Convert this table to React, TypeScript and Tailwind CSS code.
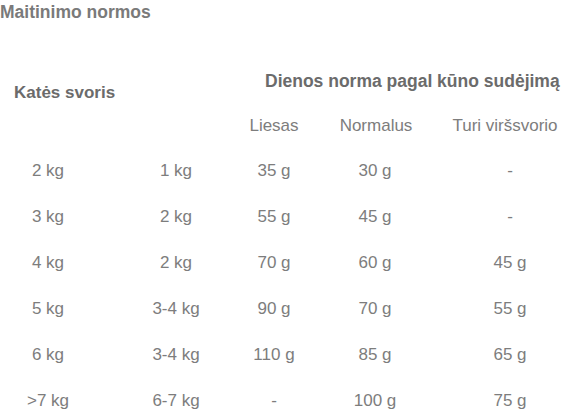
const rows = [
  ["2 kg", "1 kg", "35 g", "30 g", "-"],
  ["3 kg", "2 kg", "55 g", "45 g", "-"],
  ["4 kg", "2 kg", "70 g", "60 g", "45 g"],
  ["5 kg", "3-4 kg", "90 g", "70 g", "55 g"],
  ["6 kg", "3-4 kg", "110 g", "85 g", "65 g"],
  [">7 kg", "6-7 kg", "-", "100 g", "75 g"],
];

// per-column padding so the text centres land where the original table has them
const cellPad = ["pr-[16px]", "pl-[16px]", "", "pr-[16px]", "pl-[13px]"];

export default function App() {
  return (
    <div className="w-[565px] h-[415px] overflow-hidden bg-white font-['Liberation_Sans',Arial,sans-serif] text-[17px] leading-[19px]">
      {/* Title */}
      <h1 className="pt-[3px] font-bold text-[#7a7a7a] text-[17.5px] leading-[19px]">Maitinimo normos</h1>

      {/* Table header */}
      <div className="flex">
        <div className="w-[224px] pl-[14px] pt-[61px] font-bold text-[#6b6b6b]">Katės svoris</div>
        <div className="w-[341px]">
          <div className="mt-[50px] pl-[41px] font-bold text-[17.5px] text-[#6b6b6b] whitespace-nowrap">
            Dienos norma pagal kūno sudėjimą
          </div>
          <div className="mt-[25px] grid grid-cols-[100px_118px_123px] text-[#7d7d7d] whitespace-nowrap">
            <div className="text-center">Liesas</div>
            <div className="text-center pr-[14px]">Normalus</div>
            <div className="text-center pl-[3px]">Turi viršsvorio</div>
          </div>
        </div>
      </div>

      {/* Table body */}
      <div className="mt-[13px]">
        {rows.map((row, i) => (
          <div key={i} className="grid grid-cols-[112px_112px_100px_118px_123px] h-[46px] leading-[46px] text-[#7d7d7d] whitespace-nowrap">
            {row.map((cell, j) => (
              <div key={j} className={"text-center " + cellPad[j]}>
                {cell}
              </div>
            ))}
          </div>
        ))}
      </div>
    </div>
  );
}
